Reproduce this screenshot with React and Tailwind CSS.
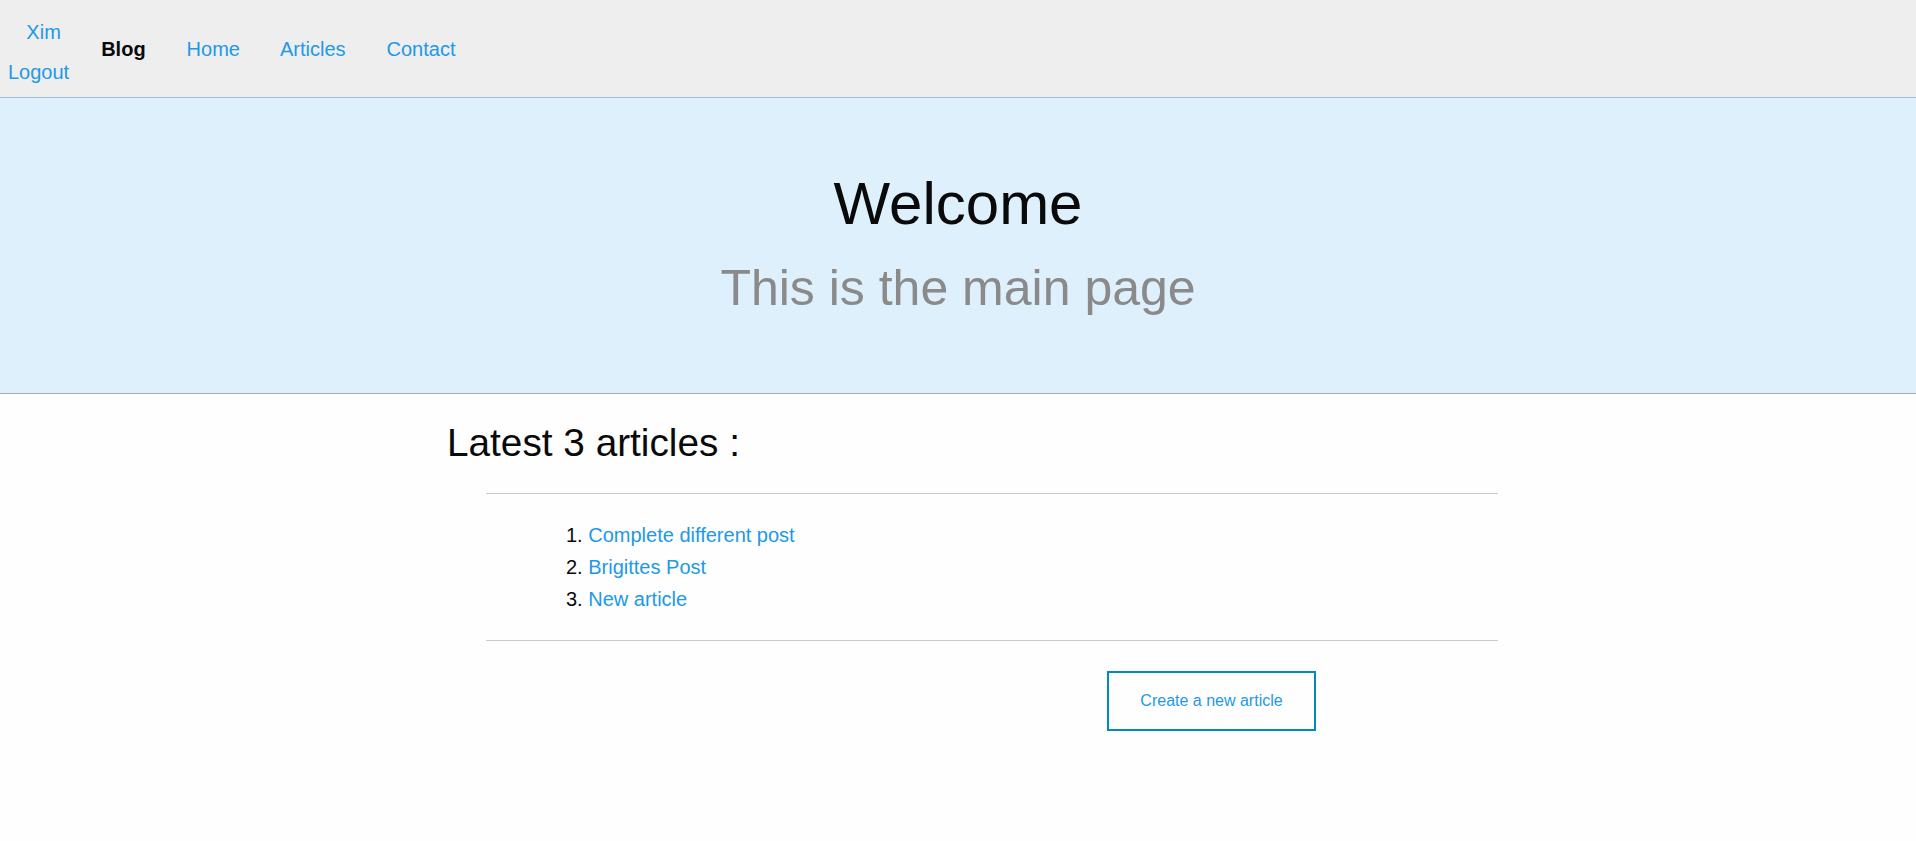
import React from "react";

export default function App() {
  const font = { fontFamily: '"Liberation Sans", Arial, Helvetica, sans-serif' };
  return (
    <div className="min-h-[841px] bg-[#fefefe] text-[#0a0a0a]" style={font}>
      <nav className="h-[98px] bg-[#eeeeee] border-b border-[#a7bccc] flex items-center text-[20px]">
        <div className="flex flex-col items-center pl-[8px] mt-[7px] leading-[40px]">
          <a className="ml-[10px] text-[#2199e8]">Xim</a>
          <a className="text-[#2199e8]">Logout</a>
        </div>
        <span className="ml-[32px] font-bold text-[#0a0a0a]">Blog</span>
        <a className="ml-[41px] text-[#2199e8]">Home</a>
        <a className="ml-[40px] text-[#2199e8]">Articles</a>
        <a className="ml-[41px] text-[#2199e8]">Contact</a>
      </nav>
      <header className="bg-[#def0fc] border-b border-[#a4adb4] pt-[64px] pb-[70px] text-center">
        <h1 className="text-[60px] leading-[84px] text-[#0a0a0a]">Welcome</h1>
        <h2 className="mt-[7px] text-[50px] leading-[70px] text-[#8a8a8a]">This is the main page</h2>
      </header>
      <main className="pt-[22px]">
        <h3 className="pl-[447px] text-[38.75px] leading-[54px] text-[#0a0a0a]">Latest 3 articles :</h3>
        <div className="ml-[486px] w-[1012px] mt-[23px]">
          <hr className="border-0 border-t border-[#cacaca]" />
          <ol className="list-decimal list-inside pl-[80px] mt-[25px] mb-[25px] text-[20px] leading-[32px]">
            <li><a className="text-[#2199e8]">Complete different post</a></li>
            <li><a className="text-[#2199e8]">Brigittes Post</a></li>
            <li><a className="text-[#2199e8]">New article</a></li>
          </ol>
          <hr className="border-0 border-t border-[#cacaca]" />
          <div className="mt-[30px] ml-[621px] w-[209px] h-[60px] border-2 border-[#008cba] flex items-center justify-center text-[16px] text-[#2199e8]">
            Create a new article
          </div>
        </div>
      </main>
    </div>
  );
}
